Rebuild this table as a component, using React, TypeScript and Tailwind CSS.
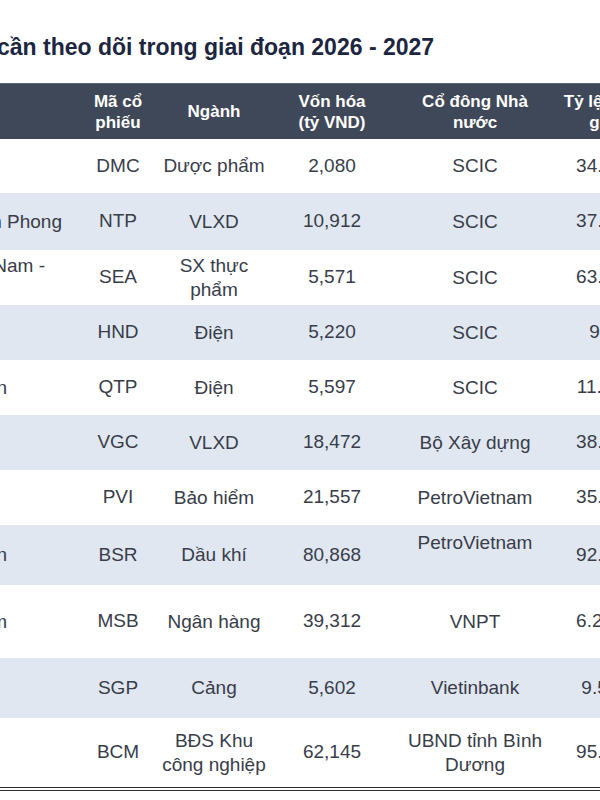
import React from 'react'

type Row = {
  name: string[]
  nameEnd: string
  code: string
  sector: string[]
  cap: string
  holder: string[]
  ratio: string
  h: string
  bg: string
}

const ROWS: Row[] = [
  { name: [''], nameEnd: 'pr-[26px]', code: 'DMC', sector: ['Dược phẩm'], cap: '2,080', holder: ['SCIC'], ratio: '34.7%', h: 'h-[54px]', bg: 'bg-white' },
  { name: ['Nhựa Tiền Phong'], nameEnd: 'pr-[26px]', code: 'NTP', sector: ['VLXD'], cap: '10,912', holder: ['SCIC'], ratio: '37.1%', h: 'h-[57px]', bg: 'bg-[#e0e7f1]' },
  { name: ['Thủy sản Việt Nam -', '\u00a0'], nameEnd: 'pr-[43px]', code: 'SEA', sector: ['SX thực', 'phẩm'], cap: '5,571', holder: ['SCIC'], ratio: '63.4%', h: 'h-[55px]', bg: 'bg-white' },
  { name: [''], nameEnd: 'pr-[26px]', code: 'HND', sector: ['Điện'], cap: '5,220', holder: ['SCIC'], ratio: '9%', h: 'h-[55px]', bg: 'bg-[#e0e7f1]' },
  { name: ['Công ty Nhiệt điện'], nameEnd: 'pr-[81px]', code: 'QTP', sector: ['Điện'], cap: '5,597', holder: ['SCIC'], ratio: '11.3%', h: 'h-[55px]', bg: 'bg-white' },
  { name: [''], nameEnd: 'pr-[26px]', code: 'VGC', sector: ['VLXD'], cap: '18,472', holder: ['Bộ Xây dựng'], ratio: '38.6%', h: 'h-[55px]', bg: 'bg-[#e0e7f1]' },
  { name: [''], nameEnd: 'pr-[26px]', code: 'PVI', sector: ['Bảo hiểm'], cap: '21,557', holder: ['PetroVietnam'], ratio: '35.0%', h: 'h-[55px]', bg: 'bg-white' },
  { name: ['Lọc hóa dầu Bình Sơn'], nameEnd: 'pr-[81px]', code: 'BSR', sector: ['Dầu khí'], cap: '80,868', holder: ['PetroVietnam', '\u00a0'], ratio: '92.1%', h: 'h-[60px]', bg: 'bg-[#e0e7f1]' },
  { name: ['Hàng Hải Việt Nam'], nameEnd: 'pr-[81px]', code: 'MSB', sector: ['Ngân hàng'], cap: '39,312', holder: ['VNPT'], ratio: '6.23%', h: 'h-[73px]', bg: 'bg-white' },
  { name: [''], nameEnd: 'pr-[26px]', code: 'SGP', sector: ['Cảng'], cap: '5,602', holder: ['Vietinbank'], ratio: '9.5%', h: 'h-[60px]', bg: 'bg-[#e0e7f1]' },
  { name: [''], nameEnd: 'pr-[26px]', code: 'BCM', sector: ['BĐS Khu', 'công nghiệp'], cap: '62,145', holder: ['UBND tỉnh Bình', 'Dương'], ratio: '95.4%', h: 'h-[69px]', bg: 'bg-white' },
]

const COLS = 'grid grid-cols-[88px_60px_132px_104px_182px_74px] w-[640px]'

function Lines({ lines }: { lines: string[] }) {
  return (
    <div className="flex flex-col items-center text-center leading-[24px] whitespace-nowrap">
      {lines.map((l, i) => (
        <span key={i}>{l}</span>
      ))}
    </div>
  )
}

export default function App() {
  return (
    <div
      className="w-[600px] h-[800px] overflow-hidden bg-white"
      style={{ fontFamily: '"Liberation Sans", Arial, sans-serif' }}
    >
      {/* title */}
      <div className="h-[83px] pt-[33px]">
        <h1 className="-ml-[3px] text-[23px] leading-[28px] font-bold text-[#1d2640] whitespace-nowrap">
          cần theo dõi trong giai đoạn 2026 - 2027
        </h1>
      </div>

      {/* header */}
      <div className={`${COLS} h-[56px] bg-[#3f4858] border-t border-[#5d6677] text-white font-bold text-[17px] leading-[21px]`}>
        <div />
        <div className="flex flex-col items-center justify-center whitespace-nowrap">
          <span>Mã cổ</span>
          <span>phiếu</span>
        </div>
        <div className="flex items-center justify-center">Ngành</div>
        <div className="flex flex-col items-center justify-center whitespace-nowrap">
          <span>Vốn hóa</span>
          <span>(tỷ VND)</span>
        </div>
        <div className="flex flex-col items-center justify-center whitespace-nowrap">
          <span>Cổ đông Nhà</span>
          <span>nước</span>
        </div>
        <div className="flex flex-col items-center justify-center whitespace-nowrap">
          <span>Tỷ lệ nắm</span>
          <span>giữ</span>
        </div>
      </div>

      {/* body */}
      <div className="border-b-[4px] border-double border-[#2e2e2e] w-[640px] text-[19px] text-[#383d49]">
        {ROWS.map((r) => (
          <div key={r.code} className={`${COLS} ${r.h} ${r.bg}`}>
            <div className={`flex items-center justify-end overflow-hidden whitespace-nowrap ${r.nameEnd}`}>
              <div className="flex flex-col leading-[24px] text-right">
                {r.name.map((l, i) => (
                  <span key={i}>{l}</span>
                ))}
              </div>
            </div>
            <div className="flex items-center justify-center">{r.code}</div>
            <div className="flex items-center justify-center">
              <Lines lines={r.sector} />
            </div>
            <div className="flex items-center justify-center">{r.cap}</div>
            <div className="flex items-center justify-center">
              <Lines lines={r.holder} />
            </div>
            <div className="flex items-center justify-center whitespace-nowrap">{r.ratio}</div>
          </div>
        ))}
      </div>
    </div>
  )
}
